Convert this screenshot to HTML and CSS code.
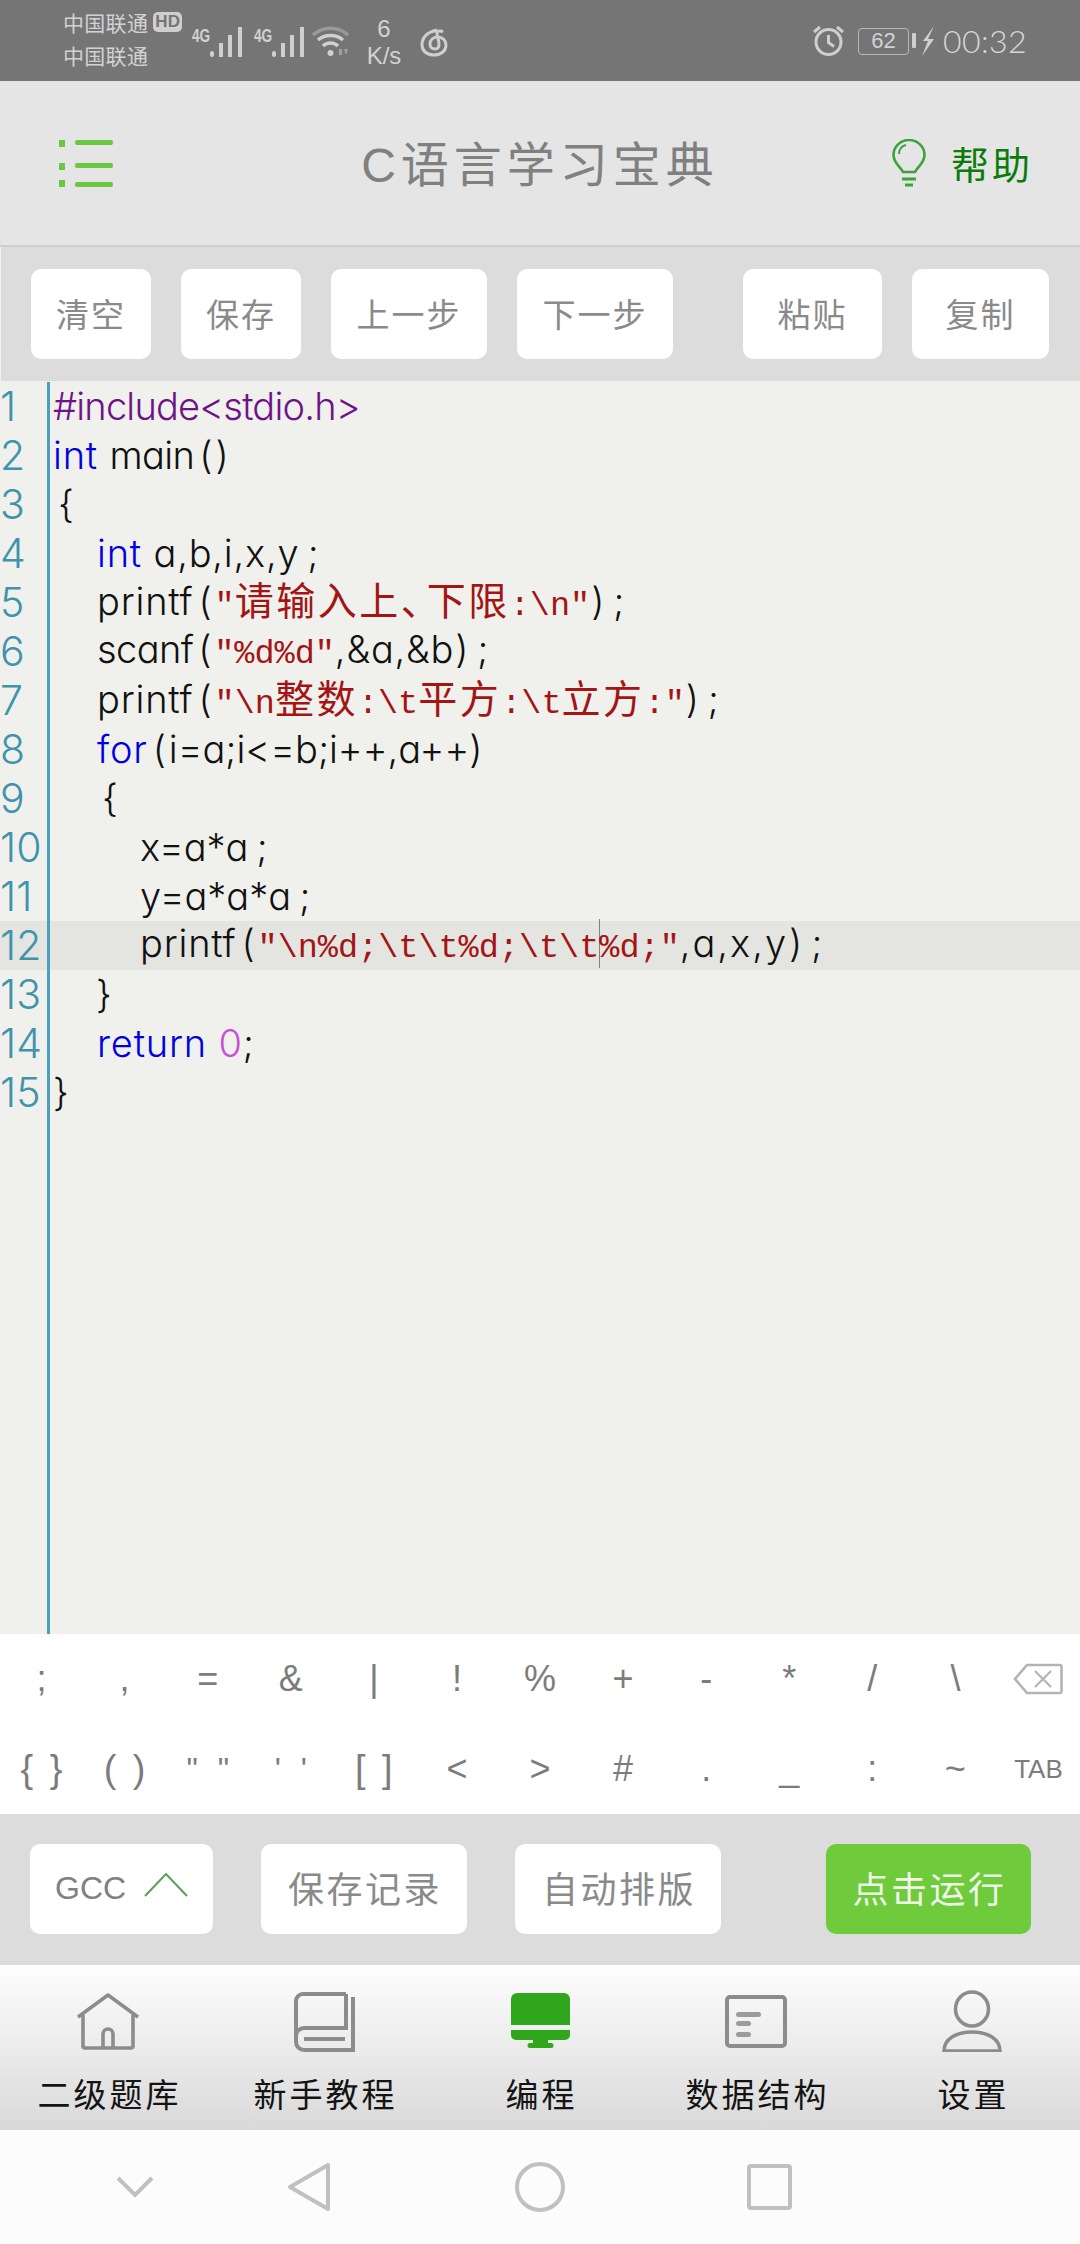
FILE: index.html
```html
<!DOCTYPE html>
<html lang="zh-CN">
<head>
<meta charset="utf-8">
<title>C语言学习宝典</title>
<link rel="stylesheet" href="styles.css">
</head>
<body>
<div class="app">
  <div class="status">
    <div class="carrier"><div class="carrier-row">中国联通<span class="hd">HD</span></div><div class="carrier-row">中国联通</div></div>
    <div class="net"><span class="g4">4G</span><svg class="bars" viewBox="0 0 33 31"><g fill="#cfcfcf"><rect x="0" y="24" width="4" height="6" rx="2"/><rect x="9" y="16" width="4" height="14"/><rect x="18" y="8" width="4" height="22"/><rect x="28" y="0" width="4" height="30"/></g></svg></div>
    <div class="net net2"><span class="g4">4G</span><svg class="bars" viewBox="0 0 33 31"><g fill="#cfcfcf"><rect x="0" y="24" width="4" height="6" rx="2"/><rect x="9" y="16" width="4" height="14"/><rect x="18" y="8" width="4" height="22"/><rect x="28" y="0" width="4" height="30"/></g></svg></div>
    <svg class="wifi" viewBox="0 0 37 30"><path d="M1 9C11 0 26 0 36 9" fill="none" stroke="#9a9a9a" stroke-width="3.5"/><path d="M6 14C13 8 24 8 31 14" fill="none" stroke="#d0d0d0" stroke-width="3.5"/><path d="M11 20C15 16 22 16 26 20" fill="none" stroke="#d0d0d0" stroke-width="3.5"/><circle cx="18.500" cy="27" r="3" fill="#d0d0d0"/><path d="M27 23h3v6h-3zM32 23h4l-2 6z" fill="#a0a0a0"/></svg>
    <div class="speed"><div>6</div><div>K/s</div></div>
    <svg class="netease" viewBox="0 0 28 30"><path d="M17 3C8 5 2 10 2 18c0 6 5 10 12 10s12-4 12-10c0-5-4-8-8-8-5 0-8 3-8 7 0 3 2 5 5 5s4-2 4-5c0-4-2-8-2-11 0-2 3-3 6-1" fill="none" stroke="#cfcfcf" stroke-width="3"/></svg>
    <div class="status-right">
      <svg class="alarm" viewBox="0 0 31 31"><circle cx="15.500" cy="17" r="12.500" fill="none" stroke="#cfcfcf" stroke-width="3"/><path d="M15.500 10v7.500l5.500 4" fill="none" stroke="#cfcfcf" stroke-width="3"/><path d="M1 7l6-5M30 7l-6-5" stroke="#cfcfcf" stroke-width="3"/></svg>
      <div class="battery">62</div><span class="nub"></span>
      <svg class="bolt" viewBox="0 0 12 30"><path d="M12 0L1 15h5l-6 15 12-17H6z" fill="#d0d0d0"/></svg>
      <div class="clock">00:32</div>
    </div>
  </div>

  <header class="head">
    <svg class="menu" viewBox="0 0 54 47"><g fill="#6cc644"><rect x="0" y="0" width="6" height="7"/><rect x="0" y="23" width="6" height="7"/><rect x="0" y="40" width="6" height="7"/><rect x="16" y="0" width="38" height="5" rx="2"/><rect x="16" y="23" width="38" height="5" rx="2"/><rect x="16" y="42" width="38" height="5" rx="2"/></g></svg>
    <h1 class="title">C语言学习宝典</h1>
    <div class="help">
      <svg class="bulb" viewBox="0 0 34 48"><path d="M11 33C8 27 1.500 24 1.500 16A15.500 15 0 0 1 32.500 16C32.500 24 26 27 23 33Z" fill="none" stroke="#3ca33c" stroke-width="2.600"/><path d="M7 15C7 10 10 7 14 6" fill="none" stroke="#3ca33c" stroke-width="2"/><path d="M10 40h14M13 46h8" stroke="#3ca33c" stroke-width="3"/></svg>
      <span class="help-text">帮助</span>
    </div>
  </header>

  <div class="toolbar">
    <button class="tbtn w120">清空</button>
    <button class="tbtn w120">保存</button>
    <button class="tbtn w156">上一步</button>
    <button class="tbtn w156">下一步</button>
    <button class="tbtn w139 push">粘贴</button>
    <button class="tbtn w137">复制</button>
  </div>

  <main class="editor">
    <div class="line"><span class="num">1</span><code class="code"><span class="pp">#include&lt;stdio.h&gt;</span></code></div>
    <div class="line"><span class="num">2</span><code class="code i0"><span class="kw">int</span> <span class="tighter">main</span><span class="pn">(</span>)</code></div>
    <div class="line"><span class="num">3</span><code class="code i1">{</code></div>
    <div class="line"><span class="num">4</span><code class="code i2"><span class="kw">int</span> a,b,i,x,y<span class="sc">;</span></code></div>
    <div class="line"><span class="num">5</span><code class="code i2">printf<span class="pn">(</span><span class="st">"<span class="cjk">请输入上<span class="dun">、</span>下限</span>:\n"</span><span class="cl">)</span><span class="sc">;</span></code></div>
    <div class="line"><span class="num">6</span><code class="code i2"><span class="tighter">scanf</span><span class="pn">(</span><span class="st">"%d%d"</span>,&amp;a,&amp;b<span class="cl">)</span><span class="sc">;</span></code></div>
    <div class="line"><span class="num">7</span><code class="code i2">printf<span class="pn">(</span><span class="st">"\n<span class="cjk">整数</span>:\t<span class="cjk">平方</span>:\t<span class="cjk">立方</span>:"</span><span class="cl">)</span><span class="sc">;</span></code></div>
    <div class="line"><span class="num">8</span><code class="code i2"><span class="kw">for</span><span class="pn">(</span><span class="tight">i=a;i&lt;=b;i++,a++)</span></code></div>
    <div class="line"><span class="num">9</span><code class="code i3">{</code></div>
    <div class="line"><span class="num">10</span><code class="code i4"><span class="tight">x=a*a</span><span class="sc">;</span></code></div>
    <div class="line"><span class="num">11</span><code class="code i4"><span class="tight">y=a*a*a</span><span class="sc">;</span></code></div>
    <div class="line cur"><span class="num">12</span><code class="code i4">printf<span class="pn">(</span><span class="st">"\n%d;\t\t%d;\t\t<span class="caret"></span>%d;"</span><span class="wide">,a,x,y</span><span class="cl">)</span><span class="sc">;</span></code></div>
    <div class="line"><span class="num">13</span><code class="code i5">}</code></div>
    <div class="line"><span class="num">14</span><code class="code i2"><span class="kw">return</span> <span class="nm">0</span>;</code></div>
    <div class="line"><span class="num">15</span><code class="code">}</code></div>
    <div class="fill"></div>
  </main>

  <div class="keys">
    <span class="key">;</span><span class="key">,</span><span class="key">=</span><span class="key">&amp;</span><span class="key">|</span><span class="key">!</span><span class="key">%</span><span class="key">+</span><span class="key">-</span><span class="key">*</span><span class="key">/</span><span class="key">\</span>
    <span class="key"><svg class="del" viewBox="0 0 50 32"><path d="M14 2H47a1.500 1.500 0 0 1 1.500 1.500V28.500A1.500 1.500 0 0 1 47 30H14L2 16Z" fill="none" stroke="#b4b4b4" stroke-width="2.600"/><path d="M22 8L38 24M38 8L22 24" stroke="#b4b4b4" stroke-width="2.200"/></svg></span>
    <span class="key pair">{ }</span><span class="key pair">( )</span><span class="key pair q">" "</span><span class="key pair q">' '</span><span class="key pair">[ ]</span><span class="key">&lt;</span><span class="key">&gt;</span><span class="key">#</span><span class="key">.</span><span class="key">_</span><span class="key">:</span><span class="key">~</span><span class="key tab">TAB</span>
  </div>

  <div class="actions">
    <button class="abtn gcc">GCC<svg class="up" viewBox="0 0 44 24"><path d="M1 23L22 1L43 23" fill="none" stroke="#5c9e5c" stroke-width="2"/></svg></button>
    <button class="abtn rec">保存记录</button>
    <button class="abtn fmt">自动排版</button>
    <button class="abtn run">点击运行</button>
  </div>

  <nav class="tabs">
    <div class="tab-item">
      <svg class="tab-ic" viewBox="0 0 62 62"><g fill="none" stroke="#8c8c8c" stroke-width="3.600" stroke-linejoin="round"><path d="M1 27L31 5L61 27"/><path d="M6 25V56a2 2 0 0 0 2 2H54a2 2 0 0 0 2-2V25"/><path d="M26 58V44a5 5 0 0 1 10 0V58"/></g></svg>
      <span class="tab-label">二级题库</span>
    </div>
    <div class="tab-item">
      <svg class="tab-ic" viewBox="0 0 62 62"><g fill="none" stroke="#8c8c8c" stroke-width="4"><path d="M53 4H10a7 7 0 0 0-7 7V52a8 8 0 0 0 8 8H60V7"/><path d="M3 46a8 8 0 0 1 8-8H53V4"/><path d="M11 49H52"/></g></svg>
      <span class="tab-label">新手教程</span>
    </div>
    <div class="tab-item">
      <svg class="tab-ic" viewBox="0 0 62 62"><path d="M8 3H55a6 6 0 0 1 6 6V35H2V9a6 6 0 0 1 6-6ZM2 40H61V45a5 5 0 0 1-5 5H39V53H42a2.500 2.500 0 0 1 0 5H21a2.500 2.500 0 0 1 0-5H24V50H7a5 5 0 0 1-5-5Z" fill="#2fa61c"/></svg>
      <span class="tab-label">编程</span>
    </div>
    <div class="tab-item">
      <svg class="tab-ic" viewBox="0 0 62 62"><rect x="2" y="7" width="58" height="49" rx="3" fill="none" stroke="#8c8c8c" stroke-width="4"/><g fill="#9c9c9c"><rect x="11" y="22" width="25" height="5" rx="2.500"/><rect x="11" y="31" width="15" height="5" rx="2.500"/><rect x="11" y="42" width="15" height="5" rx="2.500"/></g></svg>
      <span class="tab-label">数据结构</span>
    </div>
    <div class="tab-item">
      <svg class="tab-ic" viewBox="0 0 62 62"><g fill="none" stroke="#8c8c8c" stroke-width="3.600"><ellipse cx="31" cy="19" rx="16.500" ry="17"/><path d="M3 61C3 49 15 42 31 42S59 49 59 61Z" stroke-linejoin="round"/></g></svg>
      <span class="tab-label">设置</span>
    </div>
  </nav>

  <div class="sysnav">
    <svg class="n-chev" viewBox="0 0 38 22"><path d="M2 2L19 19L36 2" fill="none" stroke="#c0c0c0" stroke-width="4"/></svg>
    <svg class="n-back" viewBox="0 0 44 50"><path d="M41 3V47L3 25Z" fill="none" stroke="#c0c0c0" stroke-width="4" stroke-linejoin="round"/></svg>
    <svg class="n-home" viewBox="0 0 50 50"><circle cx="25" cy="25" r="23" fill="none" stroke="#c0c0c0" stroke-width="4"/></svg>
    <svg class="n-rec" viewBox="0 0 45 46"><rect x="2" y="2" width="41" height="42" rx="2" fill="none" stroke="#c0c0c0" stroke-width="4"/></svg>
  </div>
</div>
</body>
</html>
```
FILE: styles.css
```css
* { box-sizing: border-box; }
html, body { margin: 0; padding: 0; }
body { font-family: "Noto Sans CJK SC", sans-serif; background: #fff; }
.app { width: 1080px; height: 2244px; display: flex; flex-direction: column; overflow: hidden; }

/* status bar */
.status { height: 81px; background: #757575; color: #d2d2d2; display: flex; align-items: center; padding-left: 63px; flex: none; position: relative; }
.carrier { width: 129px; font-size: 21px; letter-spacing: 0.3px; line-height: 33px; margin-top: -4px; }
.carrier-row { display: flex; align-items: center; height: 33px; }
.hd { margin-left: 5px; width: 29px; height: 20px; background: #cfcfcf; color: #757575; border-radius: 5px; font: 700 17px/20px "Liberation Sans", sans-serif; text-align: center; }
.net { display: flex; align-items: flex-end; width: 62px; height: 31px; margin-top: 3px; }
.net2 { width: 58px; }
.g4 { font: 700 19px/17px "Liberation Sans", sans-serif; width: 18px; flex: none; align-self: flex-start; transform: scaleX(.72); transform-origin: left; white-space: nowrap; }
.bars { width: 33px; height: 31px; }
.wifi { width: 37px; height: 30px; }
.speed { width: 34px; margin-left: 18px; text-align: center; font: 400 24px/27px "Liberation Sans", sans-serif; margin-top: 3px; white-space: nowrap; }
.speed div { display: flex; justify-content: center; }
.netease { width: 28px; height: 30px; margin-left: 19px; margin-top: 2px; }
.status-right { margin-left: auto; display: flex; align-items: center; padding-right: 53px; }
.alarm { width: 31px; height: 31px; }
.battery { margin-left: 14px; width: 51px; height: 27px; border: 1.500px solid #b8b8b8; border-radius: 4px; font: 400 22px/24px "Liberation Sans", sans-serif; text-align: center; color: #d2d2d2; margin-top: 1px; }
.nub { width: 4px; height: 15px; margin-left: 3px; background: #cfcfcf; border-radius: 1px; }
.bolt { width: 12px; height: 30px; margin-left: 6px; }
.clock { margin-left: 9px; font: 300 32px/36px Lato, sans-serif; letter-spacing: 0.4px; width: 84px; color: #d8d8d8; }

/* header */
.head { height: 166px; flex: none; background: #e5e5e5; border-bottom: 2px solid #cfcfcf; position: relative; display: flex; align-items: center; justify-content: center; }
.menu { position: absolute; left: 59px; top: 59px; width: 54px; height: 47px; }
.title { margin: 0; font-weight: 400; font-size: 48px; letter-spacing: 5px; color: #808080; line-height: 60px; }
.title::first-letter { font-family: "Liberation Sans", sans-serif; }
.help { position: absolute; left: 892px; top: 58px; display: flex; align-items: center; }
.bulb { width: 34px; height: 48px; }
.help-text { margin-left: 25px; font-size: 38px; letter-spacing: 3px; color: #0a7c0a; line-height: 48px; }

/* toolbar */
.toolbar { height: 135px; flex: none; background: #dcdcdc; border-left: 1px solid #f2f2f2; border-bottom: 1px solid #efefef; display: flex; align-items: flex-start; padding: 22px 31px 0 30px; gap: 30px; }
.tbtn { height: 90px; border: 0; background: #fff; border-radius: 10px; font-family: inherit; font-size: 33px; letter-spacing: 2px; color: #8a8a8a; padding: 0 0 2px; }
.w120 { width: 120px; }
.w156 { width: 156px; }
.w139 { width: 139px; }
.w137 { width: 137px; }
.push { margin-left: auto; }

/* editor */
.editor { flex: 1; min-height: 0; background: #f0f0ec; display: flex; flex-direction: column; }
.line { height: 49px; flex: none; display: flex; align-items: center; font-family: Inter, "Noto Sans CJK SC", sans-serif; font-size: 38px; font-weight: 300; }
.cur { background: #e4e4e0; }
.num { width: 50px; height: 100%; flex: none; border-right: 3px solid #4a9fbc; color: #3f93ad; font-size: 41px; line-height: 49px; }
.code { font-family: inherit; font-size: inherit; padding-left: 3px; color: #111; white-space: pre; font-feature-settings: "cv11" 1; letter-spacing: 0.8px; line-height: 49px; }
.i0 { padding-left: 3px; }
.i1 { padding-left: 8px; }
.i2 { padding-left: 47px; }
.i3 { padding-left: 52px; }
.i4 { padding-left: 90px; }
.i5 { padding-left: 46px; }
.kw { color: #0000e0; }
.pp { color: #6e1387; letter-spacing: -0.8px; }
.tight { letter-spacing: 0; }
.tighter { letter-spacing: -0.6px; }
.wide { letter-spacing: 2px; }
.st { color: #a31515; font-family: "Liberation Mono", monospace; font-size: 33.5px; font-weight: 400; letter-spacing: 0; }
.cjk { font-family: "Noto Sans CJK SC", sans-serif; font-size: 39px; letter-spacing: 2.5px; }
.dun { letter-spacing: -13px; }
.nm { color: #c850d8; }
.pn { margin-left: 5px; margin-right: 2px; }
.cl { margin-left: 1px; }
.sc { margin-left: 8px; }
.caret { display: inline-block; width: 1px; height: 49px; background: #808080; vertical-align: top; margin-right: -1px; }
.fill { flex: 1; width: 50px; border-right: 3px solid #4a9fbc; }

/* keys */
.keys { height: 180px; flex: none; background: #fff; display: grid; grid-template-columns: repeat(13, 1fr); grid-template-rows: 90px 90px; }
.key { display: flex; align-items: center; justify-content: center; font: 300 36px/1 "Liberation Sans", sans-serif; color: #7c7c7c; white-space: pre; }
.pair { font-size: 38px; word-spacing: 6px; }
.q { font-size: 32px; word-spacing: 11px; }
.tab { font-size: 26px; }
.del { width: 50px; height: 32px; }

/* actions */
.actions { height: 151px; flex: none; background: #dcdcdc; display: flex; align-items: flex-start; padding: 30px 0 0 30px; }
.abtn { height: 90px; border: 0; background: #fff; border-radius: 10px; font-family: inherit; font-size: 36px; letter-spacing: 2.5px; color: #8a8a8a; padding: 0 0 4px 2px; }
.gcc { width: 183px; display: flex; align-items: center; padding: 0 0 2px 25px; font: 400 32px/1 "Liberation Sans", sans-serif; letter-spacing: 0; color: #808080; }
.up { width: 44px; height: 24px; margin-left: 18px; margin-top: -6px; }
.rec { width: 206px; margin-left: 48px; }
.fmt { width: 206px; margin-left: 48px; }
.run { width: 205px; margin-left: 105px; background: #6fca3c; color: #eef8e6; }

/* tabs */
.tabs { height: 165px; flex: none; display: grid; grid-template-columns: repeat(5, 1fr); background: linear-gradient(#fefefe, #d9d9d9); }
.tab-item { display: flex; flex-direction: column; align-items: center; padding-top: 25px; }
.tab-ic { width: 62px; height: 62px; }
.tab-label { margin-top: 17px; padding-left: 3px; font-size: 33px; letter-spacing: 3px; line-height: 48px; color: #141414; }

/* system nav */
.sysnav { height: 114px; flex: none; background: #fcfcfc; position: relative; }
.n-chev { position: absolute; left: 116px; top: 46px; width: 38px; height: 22px; }
.n-back { position: absolute; left: 287px; top: 32px; width: 44px; height: 50px; }
.n-home { position: absolute; left: 515px; top: 32px; width: 50px; height: 50px; }
.n-rec { position: absolute; left: 747px; top: 34px; width: 45px; height: 46px; }
```
